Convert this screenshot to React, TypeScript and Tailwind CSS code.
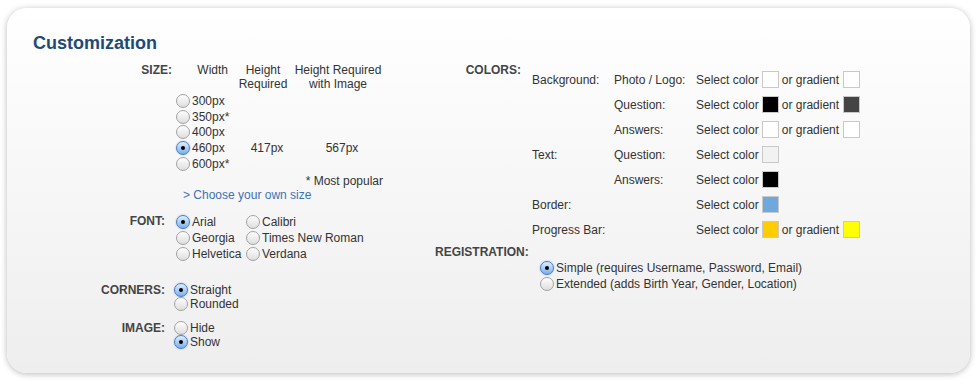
import React from "react";

const Radio = ({ checked }: { checked?: boolean }) => (
  <span
    className={`inline-flex items-center justify-center w-[14px] h-[14px] rounded-full shrink-0 border ${
      checked
        ? "border-[#4f7cb8] bg-gradient-to-b from-[#e2efff] to-[#78afee] shadow-[0_0_2px_#8ab8f5]"
        : "border-[#a3a3a3] bg-gradient-to-b from-[#fefefe] to-[#dedede]"
    }`}
  >
    {checked && <span className="w-[4px] h-[4px] rounded-full bg-black" />}
  </span>
);

const Option = ({ label, checked }: { label: string; checked?: boolean }) => (
  <span className="flex items-center">
    <Radio checked={checked} />
    <span className="ml-[2px]">{label}</span>
  </span>
);

const Swatch = ({ color, className = "" }: { color: string; className?: string }) => (
  <span className={`inline-block w-[17px] h-[17px] border border-[#c9c9c9] ${className}`} style={{ background: color }} />
);

const Pick = ({ color, gradient }: { color: string; gradient?: string }) => (
  <div className="flex items-center">
    <span>Select color</span>
    <Swatch color={color} className="ml-[3px]" />
    {gradient && (
      <>
        <span className="ml-[3px]">or gradient</span>
        <Swatch color={gradient} className="ml-[4px]" />
      </>
    )}
  </div>
);

const colorRows = [
  { a: "Background:", b: "Photo / Logo:", c: "#ffffff", g: "#ffffff" },
  { a: "", b: "Question:", c: "#000000", g: "#444444" },
  { a: "", b: "Answers:", c: "#ffffff", g: "#ffffff" },
  { a: "Text:", b: "Question:", c: "#f2f2f2" },
  { a: "", b: "Answers:", c: "#000000" },
  { a: "Border:", b: "", c: "#6fa8dc" },
  { a: "Progress Bar:", b: "", c: "#ffcc00", g: "#ffff00" },
];

const sizes = ["300px", "350px*", "400px", "460px", "600px*"];

const App: React.FC = () => {
  return (
    <div className="w-[976px] h-[387px] bg-white pl-[7px] pt-[8px] font-['Liberation_Sans',Arial,sans-serif] text-[12px] leading-[14px] text-[#333]">
      <div className="w-[963px] h-[365px] rounded-[20px] bg-gradient-to-b from-white to-[#eeeeee] shadow-[0_1px_6px_rgba(0,0,0,0.28)] pt-[24px]">
        <h2 className="pl-[26px] text-[18px] leading-[22px] font-bold text-[#1f4a78]">Customization</h2>

        <div className="flex mt-[9px]">
          {/* left column */}
          <div className="w-[428px]">
            <div className="flex">
              <div className="w-[165px] text-right font-bold text-[#444]">SIZE:</div>
              <div className="ml-[4px] w-[210px]">
                <div className="flex whitespace-nowrap">
                  <div className="w-[60px] text-right pr-[8px]">Width</div>
                  <div className="w-[54px] text-center">
                    Height
                    <br />
                    Required
                  </div>
                  <div className="w-[96px] text-center">
                    Height Required
                    <br />
                    with Image
                  </div>
                </div>
                <div className="mt-[2px]">
                  {sizes.map((s) => (
                    <div key={s} className="flex h-[15.8px] items-center">
                      <div className="w-[60px]">
                        <Option label={s} checked={s === "460px"} />
                      </div>
                      {s === "460px" && (
                        <>
                          <div className="w-[54px] text-center pl-[8px]">417px</div>
                          <div className="w-[96px] text-center pl-[8px]">567px</div>
                        </>
                      )}
                    </div>
                  ))}
                </div>
                <div className="mt-[2px] text-right pr-[3px]">* Most popular</div>
                <div className="ml-[7px] text-[#3d72b8]">&gt; Choose your own size</div>
              </div>
            </div>

            <div className="flex mt-[12px]">
              <div className="w-[158px] text-right font-bold text-[#444]">FONT:</div>
              <div className="ml-[11px] grid grid-cols-[70px_auto]">
                {["Arial", "Calibri", "Georgia", "Times New Roman", "Helvetica", "Verdana"].map((f) => (
                  <div key={f} className="h-[16px] flex items-center">
                    <Option label={f} checked={f === "Arial"} />
                  </div>
                ))}
              </div>
            </div>

            <div className="flex mt-[21px]">
              <div className="w-[158px] text-right font-bold text-[#444]">CORNERS:</div>
              <div className="ml-[9px]">
                <div className="h-[14px] flex items-center">
                  <Option label="Straight" checked />
                </div>
                <div className="h-[14px] flex items-center">
                  <Option label="Rounded" />
                </div>
              </div>
            </div>

            <div className="flex mt-[10px]">
              <div className="w-[158px] text-right font-bold text-[#444]">IMAGE:</div>
              <div className="ml-[9px]">
                <div className="h-[14px] flex items-center">
                  <Option label="Hide" />
                </div>
                <div className="h-[14px] flex items-center">
                  <Option label="Show" checked />
                </div>
              </div>
            </div>
          </div>

          {/* right column */}
          <div className="flex-1">
            <div className="flex">
              <div className="w-[86px] text-right font-bold text-[#444]">COLORS:</div>
              <div className="ml-[11px] mt-[4px]">
                {colorRows.map((r, i) => (
                  <div key={i} className="grid grid-cols-[82px_82px_auto] h-[25px] items-center">
                    <span>{r.a}</span>
                    <span>{r.b}</span>
                    <Pick color={r.c} gradient={r.g} />
                  </div>
                ))}
              </div>
            </div>

            <div className="mt-[3px] font-bold text-[#444]">REGISTRATION:</div>
            <div className="ml-[105px] mt-[1px]">
              <div className="h-[16px] flex items-center">
                <Option label="Simple (requires Username, Password, Email)" checked />
              </div>
              <div className="h-[16px] flex items-center">
                <Option label="Extended (adds Birth Year, Gender, Location)" />
              </div>
            </div>
          </div>
        </div>
      </div>
    </div>
  );
};

export default App;
